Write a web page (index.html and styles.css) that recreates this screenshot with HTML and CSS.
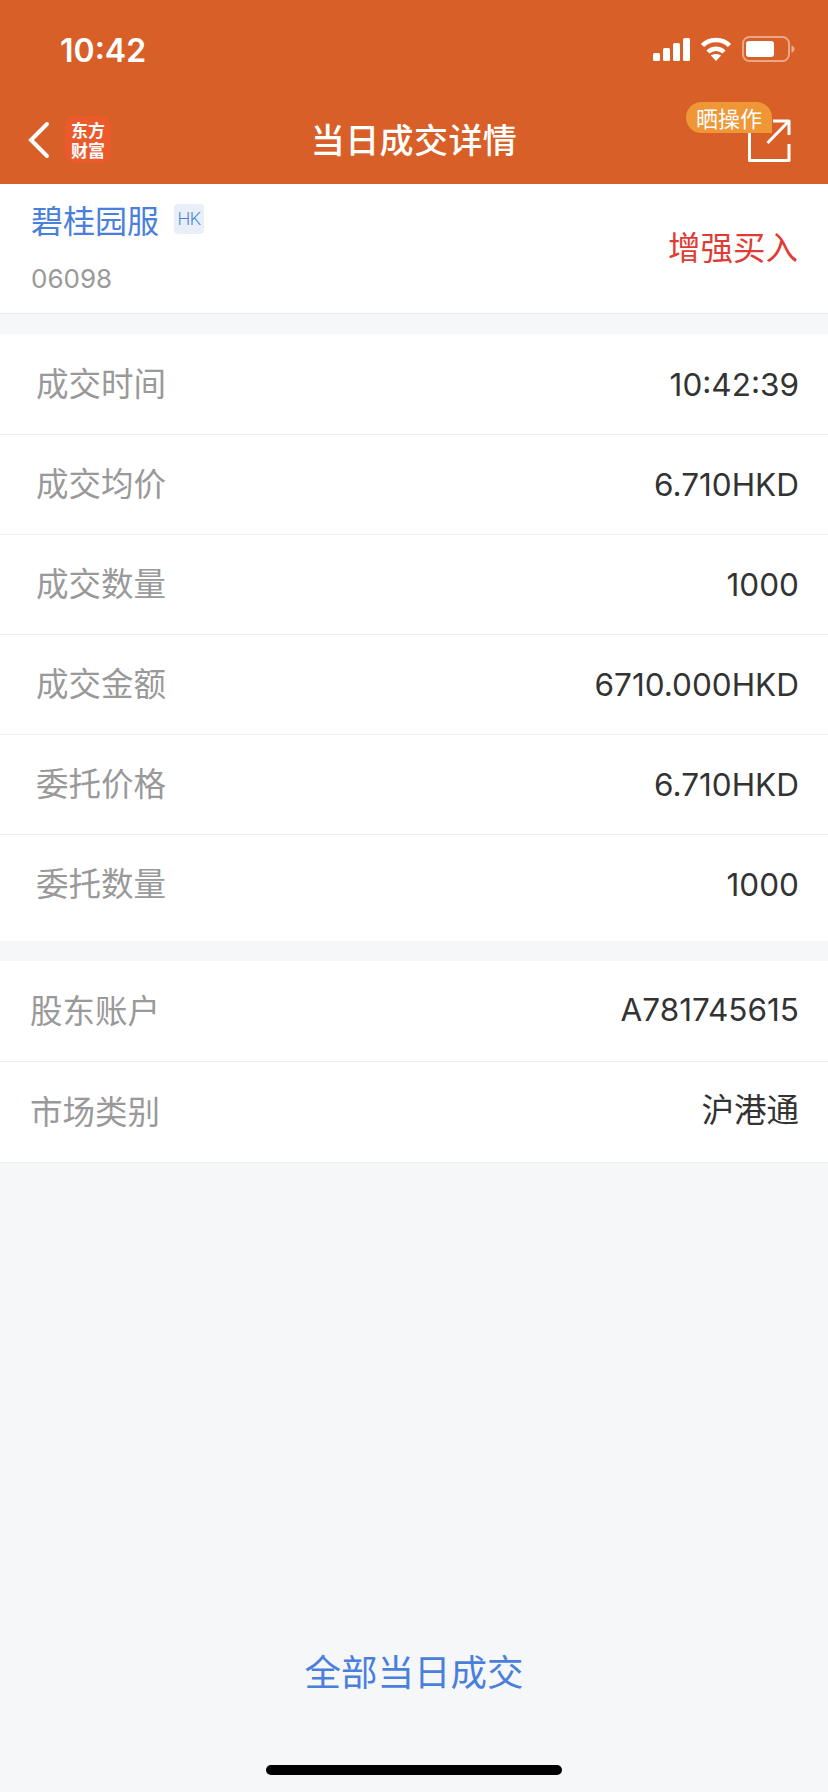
FILE: index.html
```html
<!DOCTYPE html>
<html lang="zh-CN">
<head>
<meta charset="utf-8">
<title>当日成交详情</title>
<link rel="stylesheet" href="styles.css">
</head>
<body>
<div class="page">
  <header class="head">
    <div class="status">
      <span class="time">10:42</span>
      <div class="status-icons">
        <svg class="sig" width="37" height="23" viewBox="0 0 37 23"><rect x="0" y="15" width="7" height="8" rx="1.500"/><rect x="10" y="10" width="7" height="13" rx="1.500"/><rect x="20" y="5" width="7" height="18" rx="1.500"/><rect x="30" y="0" width="7" height="23" rx="1.500"/></svg>
        <svg class="wifi" width="32" height="24" viewBox="0 0 32 24"><path d="M2.500 8.500C9.500 1 22.500 1 29.500 8.500"/><path d="M8 15C12.500 10.500 19.500 10.500 24 15"/><path class="wifi-dot" d="M16 24L10.800 18.500C13.800 16.500 18.200 16.500 21.200 18.500Z"/></svg>
        <svg class="batt" width="54" height="26" viewBox="0 0 54 26"><rect class="batt-frame" x="1" y="1" width="46" height="24" rx="6.500"/><rect class="batt-fill" x="4" y="5" width="28" height="16" rx="3"/><path class="batt-cap" d="M49.500 9.500C51.500 10 52.500 11.500 52.500 13C52.500 14.500 51.500 16 49.500 16.500Z"/></svg>
      </div>
    </div>
    <nav class="nav">
      <div class="nav-left">
        <svg class="back" width="24" height="38" viewBox="0 0 24 38"><path d="M20 3L4 19L20 35"/></svg>
        <div class="logo"><span class="logo-text">东方财富</span></div>
      </div>
      <h1 class="title">当日成交详情</h1>
      <div class="share">
        <svg width="44" height="44" viewBox="0 0 44 44"><path d="M26 2H42V16M42 25V41.500H2.500V12"/><path d="M20.500 24L41 3"/></svg>
        <span class="badge">晒操作</span>
      </div>
    </nav>
  </header>

  <section class="stock">
    <div class="stock-info">
      <div class="stock-name"><span class="name">碧桂园服</span><span class="tag">HK</span></div>
      <div class="code">06098</div>
    </div>
    <div class="dir">增强买入</div>
  </section>

  <section class="group group-a">
    <div class="row"><span class="k">成交时间</span><span class="v">10:42:39</span></div>
    <div class="row"><span class="k">成交均价</span><span class="v">6.710HKD</span></div>
    <div class="row"><span class="k">成交数量</span><span class="v">1000</span></div>
    <div class="row"><span class="k">成交金额</span><span class="v">6710.000HKD</span></div>
    <div class="row"><span class="k">委托价格</span><span class="v">6.710HKD</span></div>
    <div class="row row-last"><span class="k">委托数量</span><span class="v">1000</span></div>
  </section>

  <section class="group group-b">
    <div class="row"><span class="k">股东账户</span><span class="v">A781745615</span></div>
    <div class="row"><span class="k">市场类别</span><span class="v v-cjk">沪港通</span></div>
  </section>

  <div class="spacer"></div>
  <div class="all">全部当日成交</div>
  <div class="home-wrap"><div class="home"></div></div>
</div>
</body>
</html>
```
FILE: styles.css
```css
* { box-sizing: border-box; margin: 0; padding: 0; }
html, body { height: 100%; }
body {
  background: #f6f7f9;
  font-family: "Inter", "Noto Sans CJK SC", sans-serif;
  color: #2b2b2b;
}
.page { width: 828px; height: 1792px; display: flex; flex-direction: column; overflow: hidden; }
.head { background: #d85f27; height: 184px; color: #fff; flex: none; }
.status { height: 88px; display: flex; align-items: center; justify-content: space-between; padding: 10px 32px 0 60px; }
.time { font-size: 32px; font-weight: 600; line-height: 1; padding-top: 4px; }
.status-icons { display: flex; align-items: center; gap: 10px; }
.sig { fill: #fff; }
.wifi path { fill: none; stroke: #fff; stroke-width: 4.500; }
.wifi .wifi-dot { fill: #fff; stroke: none; }
.batt-frame { fill: none; stroke: #fff; stroke-opacity: .45; stroke-width: 2; }
.batt-fill { fill: #fff; }
.batt-cap { fill: #fff; fill-opacity: .5; }
.nav { height: 96px; display: flex; align-items: center; justify-content: space-between; padding: 7px 37px 0 27px; position: relative; }
.nav-left { display: flex; align-items: center; gap: 14px; }
.back { fill: none; stroke: #fff; stroke-width: 4; display: block; }
.back path { stroke-linecap: round; stroke-linejoin: miter; }
.logo { width: 46px; height: 47px; border-radius: 10px; background: #ea5a2b; display: flex; align-items: center; justify-content: center; }
.logo-text { width: 2em; font-size: 17px; line-height: 20px; font-weight: 700; color: #fff; text-align: center; font-family: "Noto Sans CJK SC", sans-serif; }
.title { position: absolute; left: 0; right: 0; top: 0; height: 96px; text-align: center; line-height: 101px; font-size: 34px; font-weight: 500; font-family: "Noto Sans CJK SC", sans-serif; letter-spacing: 0.4px; }
.share { position: relative; width: 44px; height: 44px; margin-top: 3px; }
.share svg { display: block; fill: none; stroke: #fff; stroke-width: 3; stroke-linejoin: round; }
.badge { position: absolute; right: 19px; top: -17px; width: 86px; height: 31px; background: #ef9636; border-radius: 16px 16px 0 16px; font-size: 22px; line-height: 30px; text-align: center; font-family: "Noto Sans CJK SC", sans-serif; white-space: nowrap; }

.stock { background: #fff; height: 130px; flex: none; border-bottom: 1px solid #e9eaec; display: flex; align-items: center; justify-content: space-between; padding: 0 30px 0 31px; }
.stock-info { display: flex; flex-direction: column; }
.stock-name { display: flex; align-items: flex-start; gap: 15px; height: 66px; padding-top: 12px; }
.name { font-size: 32px; line-height: 46px; color: #4a7fdc; font-family: "Noto Sans CJK SC", sans-serif; }
.tag { width: 30px; height: 30px; margin-top: 8px; background: #e8eff9; border-radius: 4px; color: #4a7fdc; font-size: 18px; font-weight: 300; line-height: 30px; text-align: center; font-family: "Roboto", sans-serif; letter-spacing: -0.5px; }
.code { font-size: 26px; color: #999; line-height: 34px; margin-top: 12px; height: 52px; }
.dir { font-size: 32.500px; color: #e03c36; font-family: "Noto Sans CJK SC", sans-serif; margin-bottom: 7px; }

.group { background: #fff; flex: none; }
.group-a { margin-top: 20px; padding-top: 1px; }
.group-b { margin-top: 20px; }
.row { height: 100px; border-bottom: 1px solid #eeeeee; display: flex; align-items: center; justify-content: space-between; padding: 0 29px 0 36px; }
.row-last { height: 106px; border-bottom: 0; padding-bottom: 7px; }
.group-b .row { height: 101px; padding-left: 30px; }
.k { font-size: 32.500px; color: #999; font-family: "Noto Sans CJK SC", sans-serif; padding-bottom: 7px; }
.v { font-size: 31.500px; color: #333; }
.group-b .v { padding-bottom: 4px; }
.group-b .k { padding-bottom: 6px; }
.group-b .v-cjk { font-family: "Noto Sans CJK SC", sans-serif; font-size: 32.500px; padding-bottom: 9px; }
.spacer { flex: 1; }
.all { text-align: center; font-size: 36.500px; color: #4a7fdc; line-height: 52px; font-family: "Noto Sans CJK SC", sans-serif; margin-bottom: 55px; }
.home-wrap { height: 40px; display: flex; justify-content: center; flex: none; padding-top: 13px; }
.home { width: 296px; height: 10px; border-radius: 5px; background: #000; }
```
